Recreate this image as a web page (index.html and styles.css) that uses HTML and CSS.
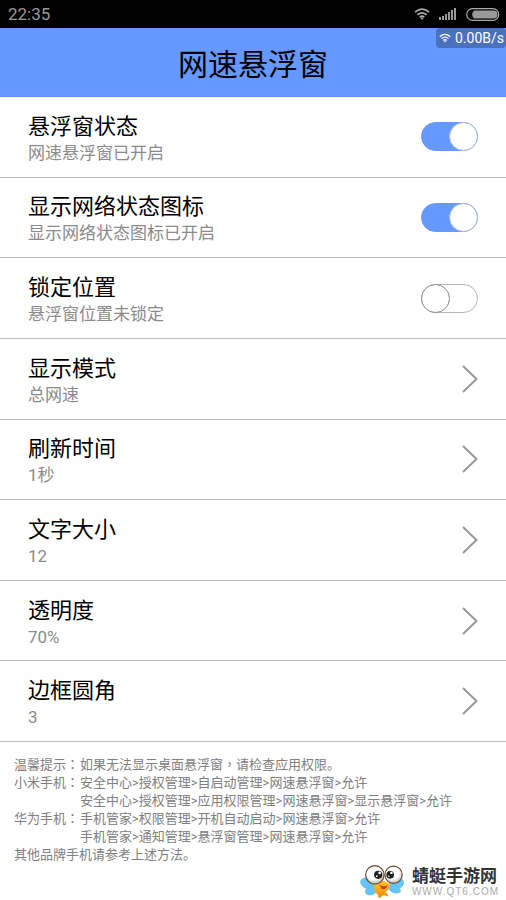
FILE: index.html
```html
<!DOCTYPE html>
<html lang="zh-CN">
<head>
<meta charset="utf-8">
<meta name="viewport" content="width=device-width, initial-scale=1">
<title>网速悬浮窗</title>
<link rel="stylesheet" href="styles.css">
</head>
<body>
<div class="statusbar">
  <span>22:35</span>
  <div class="status-icons">
    <svg width="16" height="12" viewBox="0 0 16 12" fill="none" stroke="#aaa" stroke-width="1.6"><path d="M1 4.2Q8-1.8 15 4.2M3.4 6.8Q8 2.8 12.6 6.8M5.7 9.2Q8 7.2 10.3 9.2"/><path d="M6.2 9.6L8 12l1.8-2.4z" fill="#aaa" stroke="none"/></svg>
    <svg width="18" height="12" viewBox="0 0 18 12" fill="#999"><path d="M0 9h2v3H0zM3 8h2v4H3zM6 6h2v6H6zM9 4h2v8H9zM12 2h2v10h-2zM15 0h2v12h-2z"/></svg>
    <svg width="34" height="13" viewBox="0 0 34 13"><rect x=".7" y=".7" width="32" height="11.6" rx="5.8" fill="none" stroke="#aaa" stroke-width="1.2"/><path d="M8 2.500h19.500a4 4 0 0 1 0 8H8q-3.500-4 0-8z" fill="#999"/></svg>
  </div>
</div>
<header class="appbar">
  <h1>网速悬浮窗</h1>
  <div class="speed">
    <svg width="12" height="10" viewBox="0 0 16 12" fill="none" stroke="#fff" stroke-width="1.7"><path d="M1 4.2Q8-1.8 15 4.2M3.4 6.8Q8 2.8 12.6 6.8M5.7 9.2Q8 7.2 10.3 9.2"/><path d="M6.2 9.6L8 12l1.8-2.4z" fill="#fff" stroke="none"/></svg>
    <span>0.00B/s</span>
  </div>
</header>
<main>
  <div class="settings">
    <label class="row"><span class="text"><span class="name">悬浮窗状态</span><span class="value">网速悬浮窗已开启</span></span><input class="switch" type="checkbox" checked></label>
    <label class="row"><span class="text"><span class="name">显示网络状态图标</span><span class="value">显示网络状态图标已开启</span></span><input class="switch" type="checkbox" checked></label>
    <label class="row"><span class="text"><span class="name">锁定位置</span><span class="value">悬浮窗位置未锁定</span></span><input class="switch" type="checkbox"></label>
    <button class="row" type="button"><span class="text"><span class="name">显示模式</span><span class="value">总网速</span></span><svg class="chevron" viewBox="0 0 16 28"><path d="M1 1l13.5 13L1 27"/></svg></button>
    <button class="row" type="button"><span class="text"><span class="name">刷新时间</span><span class="value">1秒</span></span><svg class="chevron" viewBox="0 0 16 28"><path d="M1 1l13.5 13L1 27"/></svg></button>
    <button class="row" type="button"><span class="text"><span class="name">文字大小</span><span class="value">12</span></span><svg class="chevron" viewBox="0 0 16 28"><path d="M1 1l13.5 13L1 27"/></svg></button>
    <button class="row" type="button"><span class="text"><span class="name">透明度</span><span class="value">70%</span></span><svg class="chevron" viewBox="0 0 16 28"><path d="M1 1l13.5 13L1 27"/></svg></button>
    <button class="row" type="button"><span class="text"><span class="name">边框圆角</span><span class="value">3</span></span><svg class="chevron" viewBox="0 0 16 28"><path d="M1 1l13.5 13L1 27"/></svg></button>
  </div>
  <div class="tips">
    <span>温馨提示<span class="mark" lang="zh-TW">：</span></span><span>如果无法显示桌面悬浮窗<span class="mark" lang="zh-TW">，</span>请检查应用权限。</span>
    <span>小米手机<span class="mark" lang="zh-TW">：</span></span><span>安全中心&gt;授权管理&gt;自启动管理&gt;网速悬浮窗&gt;允许</span>
    <span class="second">安全中心&gt;授权管理&gt;应用权限管理&gt;网速悬浮窗&gt;显示悬浮窗&gt;允许</span>
    <span>华为手机<span class="mark" lang="zh-TW">：</span></span><span>手机管家&gt;权限管理&gt;开机自动启动&gt;网速悬浮窗&gt;允许</span>
    <span class="second">手机管家&gt;通知管理&gt;悬浮窗管理&gt;网速悬浮窗&gt;允许</span>
    <span class="full">其他品牌手机请参考上述方法。</span>
  </div>
</main>
<footer class="brand">
  <svg width="46" height="35" viewBox="0 0 48 36">
    <defs>
      <radialGradient id="eye" cx=".45" cy=".35" r=".6"><stop offset=".65" stop-color="#fff"/><stop offset="1" stop-color="#c9c6c2"/></radialGradient>
      <linearGradient id="body" x2="0" y2="1"><stop offset="0" stop-color="#ffc729"/><stop offset="1" stop-color="#f08a12"/></linearGradient>
    </defs>
    <g fill="#65c3f5"><ellipse cx="9" cy="20" rx="9" ry="6" transform="rotate(18 9 20)"/><ellipse cx="12" cy="27" rx="7" ry="5" transform="rotate(-25 12 27)"/><ellipse cx="38" cy="20" rx="8" ry="6" transform="rotate(-12 38 20)"/><ellipse cx="36" cy="26" rx="7" ry="4" transform="rotate(20 36 26)"/></g>
    <path d="M15 20q9-6 16 1 0 6-5 8 4 2 3 5-5-4-8 1-3 0-2-3-6-4-4-12z" fill="url(#body)"/>
    <path d="M20 21q5 4 9 0-2 6-6 5z" fill="#d9322b"/>
    <g fill="url(#eye)" stroke="#67472e" stroke-width="1.2"><circle cx="15.500" cy="11" r="9.600"/><circle cx="35" cy="11" r="9"/></g>
    <circle cx="19" cy="11" r="4.300" fill="#222"/><circle cx="31.500" cy="11" r="4" fill="#222"/>
    <g fill="#fff"><circle cx="20.500" cy="9" r="1.400"/><circle cx="17.500" cy="12.500" r=".9"/><circle cx="32.800" cy="9" r="1.300"/><circle cx="30" cy="12.500" r=".8"/></g>
  </svg>
  <div class="brand-text"><strong>蜻蜓手游网</strong><span>WWW.QT6.COM</span></div>
</footer>
</body>
</html>
```
FILE: styles.css
```css
*, *::before { box-sizing: border-box; }
body {
  margin: 0;
  min-height: 100vh;
  background: #fff;
  color: #000;
  font-family: Roboto, "Noto Sans CJK SC", sans-serif;
}
svg { display: block; flex: none; }
.statusbar {
  display: flex;
  align-items: center;
  justify-content: space-between;
  height: 28px;
  padding: 0 6px 0 8px;
  background: #000;
  color: #999;
  font-size: 17px;
}
.status-icons { display: flex; align-items: center; gap: 9px; }
.appbar {
  position: relative;
  display: flex;
  align-items: center;
  justify-content: center;
  min-height: 69px;
  padding-top: 4px;
  background: #6699ff;
}
h1 { margin: 0; font-size: 30px; line-height: 44px; font-weight: 400; }
.speed {
  position: absolute;
  top: 0;
  right: 0;
  display: flex;
  align-items: center;
  gap: 4px;
  height: 20px;
  padding: 0 2px 0 3px;
  border-radius: 4px;
  background: #4a71bd;
  color: #fff;
  font-size: 14px;
}
.settings {
  display: grid;
  grid-auto-rows: 1fr;
  min-height: 645px;
}
.row {
  display: flex;
  align-items: center;
  justify-content: space-between;
  width: 100%;
  margin: 0;
  padding: 0 28px;
  border: 0;
  border-bottom: 1px solid #bbb;
  background: none;
  color: inherit;
  font: inherit;
  text-align: left;
}
.text { display: flex; flex-direction: column; padding-top: 4px; }
.name { font-size: 22px; line-height: 28px; font-weight: 400; }
.value { color: #8b8b8b; font-size: 17px; line-height: 24px; }
.switch {
  appearance: none;
  flex: none;
  width: 57px;
  height: 29px;
  margin: 0;
  border: 1px solid #b5b5b5;
  border-radius: 15px;
  background: #fff;
}
.switch::before {
  content: "";
  display: block;
  width: 29px;
  height: 29px;
  margin: -1px;
  border: 1px solid #888;
  border-radius: 50%;
  background: #fff;
}
.switch:checked { border-color: #6699ff; background: #6699ff; }
.switch:checked::before { margin-left: auto; border-color: #a3b3d6; }
.chevron {
  width: 16px;
  height: 28px;
  fill: none;
  stroke: #999;
  stroke-width: 2;
}
.tips {
  display: grid;
  grid-template-columns: 66px 1fr;
  padding: 14px 14px 0;
  color: #808080;
  font-size: 13px;
  line-height: 18px;
}
.second { grid-column: 2; }
.full { grid-column: 1 / -1; }
.mark { font-family: "Noto Sans CJK TC", sans-serif; line-height: 0; }
.brand {
  display: flex;
  align-items: center;
  justify-content: flex-end;
  gap: 6px;
  padding-right: 7px;
}
.brand-text { display: flex; flex-direction: column; }
.brand strong { color: #333; font-size: 17px; line-height: 20px; font-weight: 700; }
.brand-text span {
  color: #aaa;
  font-family: "Liberation Sans", sans-serif;
  font-size: 10px;
  line-height: 12px;
  letter-spacing: 1px;
}
```
